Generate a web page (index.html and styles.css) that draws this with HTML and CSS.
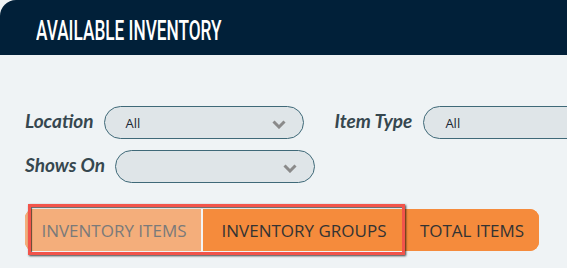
FILE: index.html
```html
<!DOCTYPE html>
<html>
<head>
<meta charset="utf-8">
<link rel="stylesheet" href="styles.css">
</head>
<body>
<div class="panel">
  <header class="panel-header">
    <h1 class="title"><span class="title-text">AVAILABLE INVENTORY</span></h1>
  </header>
  <div class="panel-body">
    <div class="filters">
      <div class="filter-row">
        <div class="field">
          <label class="field-label">Location</label>
          <div class="select"><span class="select-value">All</span>
            <svg class="chevron" width="14" height="9" viewBox="0 0 14 9"><polyline points="1.5,1.5 7,7 12.5,1.5" fill="none" stroke="#8a8a8a" stroke-width="3"/></svg>
          </div>
        </div>
        <div class="field field-spaced">
          <label class="field-label">Item Type</label>
          <div class="select"><span class="select-value">All</span>
            <svg class="chevron" width="14" height="9" viewBox="0 0 14 9"><polyline points="1.5,1.5 7,7 12.5,1.5" fill="none" stroke="#8a8a8a" stroke-width="3"/></svg>
          </div>
        </div>
      </div>
      <div class="filter-row">
        <div class="field">
          <label class="field-label">Shows On</label>
          <div class="select"><span class="select-value"></span>
            <svg class="chevron" width="14" height="9" viewBox="0 0 14 9"><polyline points="1.5,1.5 7,7 12.5,1.5" fill="none" stroke="#8a8a8a" stroke-width="3"/></svg>
          </div>
        </div>
      </div>
    </div>
    <div class="tabs-wrap">
      <div class="tabs">
        <div class="tab tab-light">INVENTORY ITEMS</div>
        <div class="tab-sep"></div>
        <div class="tab tab-active">INVENTORY GROUPS</div>
        <div class="tab tab-total">TOTAL ITEMS</div>
      </div>
      <div class="focus-ring"></div>
    </div>
  </div>
</div>
</body>
</html>
```
FILE: styles.css
```css
html, body {
  margin: 0;
  padding: 0;
  background: #eff3f5;
  overflow: hidden;
}
.panel {
  width: 567px;
  height: 268px;
  background: #eff3f5;
  overflow: hidden;
}
.panel-header {
  height: 55px;
  background: #012039;
  border-top-left-radius: 16px;
  display: flex;
  align-items: center;
  padding-left: 36px;
  box-sizing: border-box;
}
.title {
  margin: 0;
  font-weight: 400;
  line-height: 1;
}
.title-text {
  display: inline-block;
  font-family: "Roboto", "Liberation Sans", sans-serif;
  font-weight: 500;
  font-size: 28px;
  color: #ffffff;
  transform: scaleX(0.615);
  transform-origin: left center;
  white-space: nowrap;
  position: relative;
  top: 1px;
}
.panel-body {
  padding: 51px 0 0 25px;
}
.filters {
  display: flex;
  flex-direction: column;
  gap: 11px;
}
.filter-row {
  display: flex;
  align-items: center;
  width: max-content;
}
.field {
  display: flex;
  align-items: center;
  flex-shrink: 0;
}
.field-spaced {
  margin-left: 31px;
}
.field-label {
  font-family: "Lato", "Open Sans", sans-serif;
  font-style: italic;
  font-weight: 700;
  font-size: 19px;
  color: #36474f;
  margin-right: 10px;
  white-space: nowrap;
  position: relative;
  top: -2px;
}
.field-spaced .field-label {
  margin-right: 11px;
}
.select {
  width: 200px;
  height: 33px;
  box-sizing: border-box;
  border: 1px solid #3f6978;
  border-radius: 17px;
  background: #dfe5e8;
  display: flex;
  align-items: center;
  justify-content: space-between;
  padding: 0 17px 0 21px;
  flex-shrink: 0;
}
.select-value {
  font-family: "Open Sans", "Noto Sans", sans-serif;
  font-size: 13px;
  color: #1b2733;
}
.chevron {
  display: block;
  margin-top: 3px;
}
.tabs-wrap {
  position: relative;
  margin-top: 26px;
  width: 514px;
}
.tabs {
  display: flex;
  height: 42px;
  background: #f58b3c;
  border-radius: 9px;
  overflow: hidden;
}
.tab {
  display: flex;
  align-items: center;
  justify-content: center;
  font-family: "Open Sans", "Noto Sans", sans-serif;
  font-size: 17px;
  color: #333333;
  white-space: nowrap;
}
.tab-light {
  width: 176px;
  background: #f4ae7b;
  color: #7a7a7a;
  padding-left: 2px;
  box-sizing: border-box;
}
.tab-sep {
  width: 2px;
  background: #f4f4f4;
}
.tab-active {
  width: 202px;
  background: #f58b3c;
}
.tab-total {
  flex: 1;
  background: #f58b3c;
}
.focus-ring {
  position: absolute;
  left: 3px;
  top: -5px;
  width: 377px;
  height: 51px;
  box-sizing: border-box;
  border: 3px solid #f2544b;
  box-shadow: 1px 1px 2px rgba(0, 0, 0, 0.75), inset 1px 1px 1px rgba(0, 0, 0, 0.6);
  pointer-events: none;
}
```
